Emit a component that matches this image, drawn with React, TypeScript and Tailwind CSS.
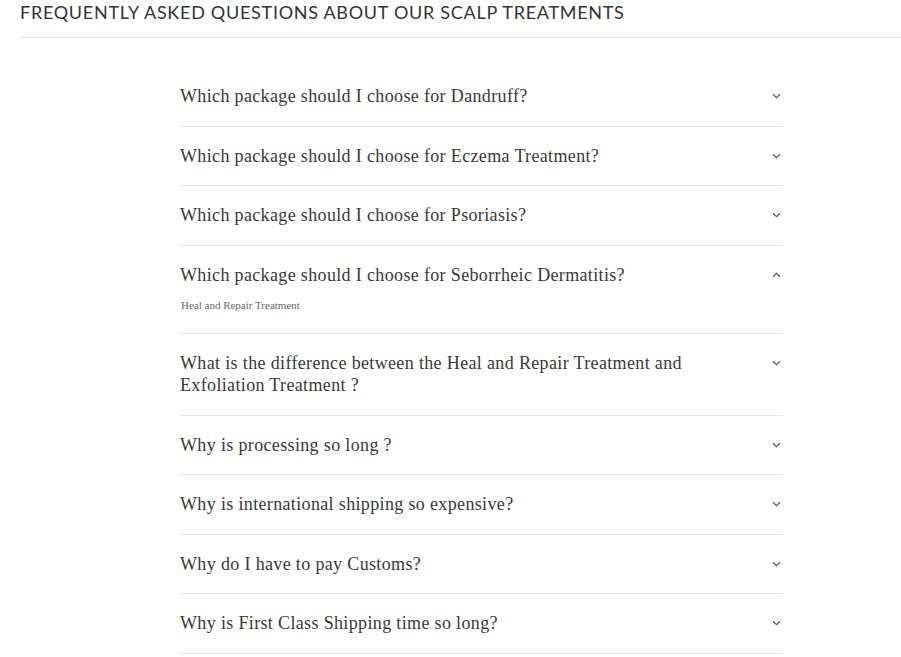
import { useState } from 'react';

const faqs = [
  { q: 'Which package should I choose for Dandruff?', a: 'Heal and Repair Treatment' },
  { q: 'Which package should I choose for Eczema Treatment?', a: 'Heal and Repair Treatment' },
  { q: 'Which package should I choose for Psoriasis?', a: 'Heal and Repair Treatment' },
  { q: 'Which package should I choose for Seborrheic Dermatitis?', a: 'Heal and Repair Treatment' },
  {
    q: 'What is the difference between the Heal and Repair Treatment and Exfoliation Treatment ?',
    a: 'Heal and Repair Treatment',
  },
  { q: 'Why is processing so long ?', a: 'Heal and Repair Treatment' },
  { q: 'Why is international shipping so expensive?', a: 'Heal and Repair Treatment' },
  { q: 'Why do I have to pay Customs?', a: 'Heal and Repair Treatment' },
  { q: 'Why is First Class Shipping time so long?', a: 'Heal and Repair Treatment' },
];

function Chevron({ up }: { up: boolean }) {
  return (
    <svg width="9" height="6" viewBox="0 0 9 6" className={up ? 'rotate-180' : ''}>
      <path d="M1 1.2 L4.5 4.6 L8 1.2" fill="none" stroke="#555" strokeWidth="1.2" />
    </svg>
  );
}

export default function App() {
  const [open, setOpen] = useState<number | null>(3);

  return (
    <div className="min-h-screen bg-white">
      <div className="pl-5">
        <h2
          className="pt-0 pb-[13px] text-[18px] leading-[24px] tracking-[0.04em] text-[#333] border-b border-[#e6e6e6]"
          style={{ fontFamily: 'Lato, "Liberation Sans", sans-serif' }}
        >
          FREQUENTLY ASKED QUESTIONS ABOUT OUR SCALP TREATMENTS
        </h2>
      </div>

      <div className="mt-[29px] ml-[179px] w-[604px]" style={{ fontFamily: '"Liberation Serif", serif' }}>
        {faqs.map((f, i) => (
          <div key={i} className="border-b border-[#e4e4e4] pt-[18px] pb-[18.5px]">
            <button
              type="button"
              onClick={() => setOpen(open === i ? null : i)}
              className="flex w-full items-start justify-between text-left"
            >
              <span className="pl-px max-w-[520px] text-[18px] leading-[22px] tracking-[0.35px] text-[#383838]">
                {f.q}
              </span>
              <span className="mr-[2px] mt-[8px]">
                <Chevron up={open === i} />
              </span>
            </button>
            {open === i && (
              <p className="mt-[11px] mb-[2px] pl-[2px] text-[11px] leading-[16px] text-[#666]">{f.a}</p>
            )}
          </div>
        ))}
      </div>
    </div>
  );
}
